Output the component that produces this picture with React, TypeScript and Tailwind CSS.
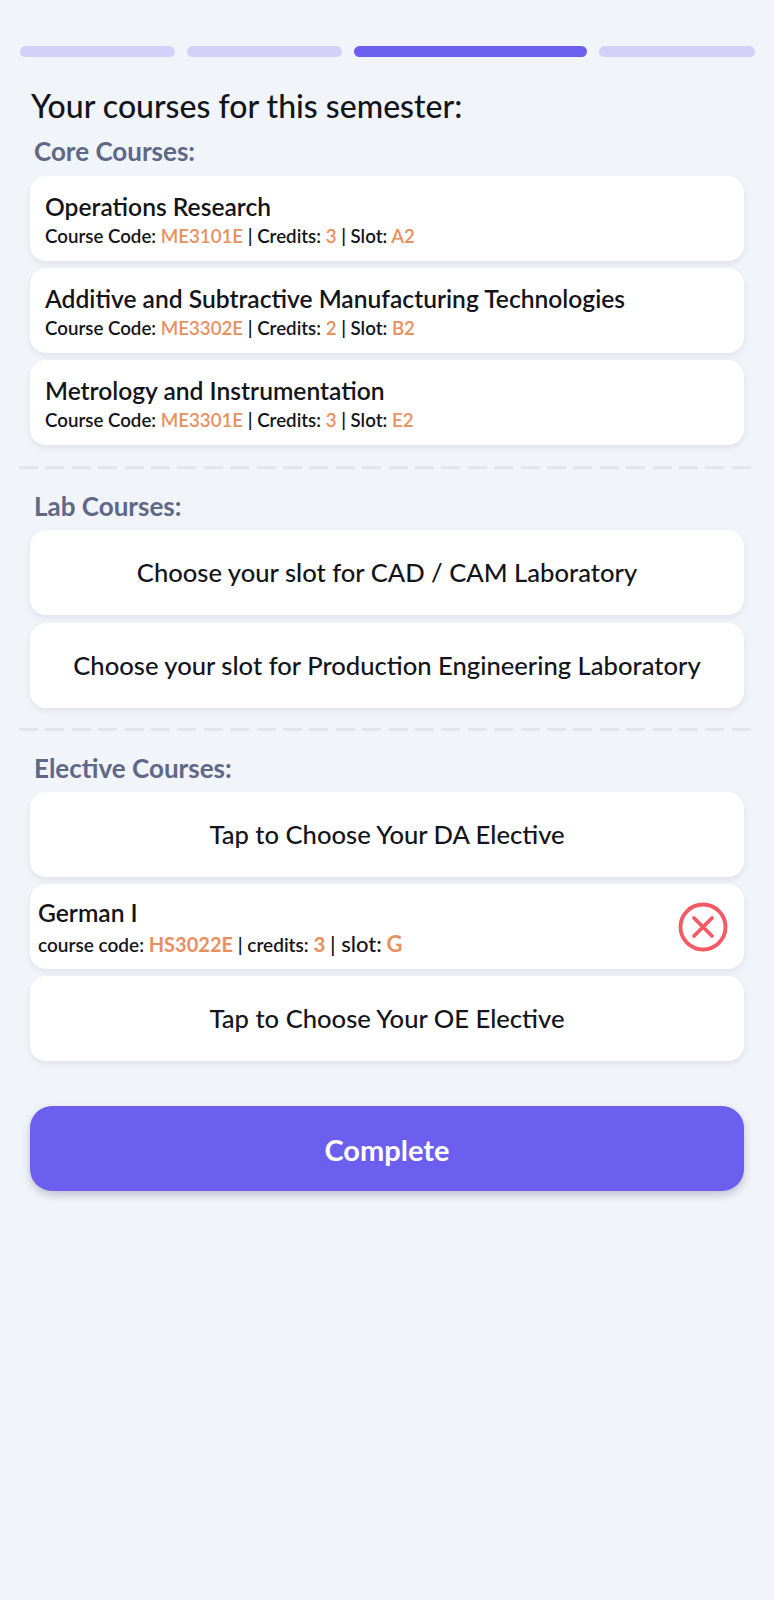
const fontStack = "font-['Lato','Liberation_Sans',sans-serif]"

function ProgressBars() {
  return (
    <div className="flex gap-[12px] pl-[20px]">
      <div className="h-[11px] w-[155px] rounded-full bg-[#d3d1f8]" />
      <div className="h-[11px] w-[155px] rounded-full bg-[#d3d1f8]" />
      <div className="h-[11px] w-[233px] rounded-full bg-[#6c5fef]" />
      <div className="h-[11px] w-[156px] rounded-full bg-[#d3d1f8]" />
    </div>
  )
}

function Val({ children }: { children: string }) {
  return <span className="text-[#e9905f]">{children}</span>
}

function CourseCard({ title, code, credits, slot }: { title: string; code: string; credits: string; slot: string }) {
  return (
    <div className="flex h-[85px] flex-col justify-center rounded-[16px] bg-white pt-[2px] pl-[15px] shadow-[0_3px_6px_rgba(120,130,150,0.14)]">
      <div className="text-[24.6px] leading-[29px] font-semibold text-[#14151a]">{title}</div>
      <div className="mt-[4px] text-[18.7px] leading-[23px] font-semibold text-[#14151a]">
        Course Code: <Val>{code}</Val> | Credits: <Val>{credits}</Val> | Slot: <Val>{slot}</Val>
      </div>
    </div>
  )
}

function ActionCard({ label }: { label: string }) {
  return (
    <div className="flex h-[85px] items-center justify-center rounded-[16px] bg-white text-[25.6px] font-medium text-[#14151a] shadow-[0_3px_6px_rgba(120,130,150,0.14)]">
      {label}
    </div>
  )
}

function Dashes() {
  return <div className="-mx-[11px] h-[3px] bg-[repeating-linear-gradient(90deg,#e2e6ec_0_19px,transparent_19px_26.4px)]" />
}

function SectionLabel({ children }: { children: string }) {
  return <div className="pl-[4px] text-[26px] leading-[30px] font-bold text-[#5f6886]">{children}</div>
}

export default function App() {
  return (
    <div className={`${fontStack} min-h-[1600px] w-[774px] bg-[#f1f4f9] pt-[46px]`}>
      <ProgressBars />
      <div className="px-[30px]">
        <h1 className="mt-[30px] pl-[1px] text-[32px] leading-[38px] font-medium text-[#14151a]">Your courses for this semester:</h1>
        <div className="mt-[11px]">
          <SectionLabel>Core Courses:</SectionLabel>
        </div>
        <div className="mt-[10px] flex flex-col gap-[7px]">
          <CourseCard title="Operations Research" code="ME3101E" credits="3" slot="A2" />
          <CourseCard title="Additive and Subtractive Manufacturing Technologies" code="ME3302E" credits="2" slot="B2" />
          <CourseCard title="Metrology and Instrumentation" code="ME3301E" credits="3" slot="E2" />
        </div>
        <div className="mt-[21px]">
          <Dashes />
        </div>
        <div className="mt-[22px]">
          <SectionLabel>Lab Courses:</SectionLabel>
        </div>
        <div className="mt-[9px] flex flex-col gap-[7.5px]">
          <ActionCard label="Choose your slot for CAD / CAM Laboratory" />
          <ActionCard label="Choose your slot for Production Engineering Laboratory" />
        </div>
        <div className="mt-[20px]">
          <Dashes />
        </div>
        <div className="mt-[22px]">
          <SectionLabel>Elective Courses:</SectionLabel>
        </div>
        <div className="mt-[9.5px] flex flex-col gap-[7px]">
          <ActionCard label="Tap to Choose Your DA Elective" />
          <div className="flex h-[85px] items-center justify-between rounded-[16px] bg-white pr-[16px] pl-[8px] shadow-[0_3px_6px_rgba(120,130,150,0.14)]">
            <div>
              <div className="text-[24.6px] leading-[30px] font-semibold text-[#14151a]">German I</div>
              <div className="mt-[4px] text-[19px] leading-[23px] font-semibold text-[#14151a]">
                course code: <span className="text-[20px] font-bold text-[#e9905f]">HS3022E</span> | credits: <span className="text-[20.5px] font-bold text-[#e9905f]">3</span> <span className="text-[22px] font-medium">| slot:</span> <span className="text-[22px] font-bold text-[#e9905f]">G</span>
              </div>
            </div>
            <svg width="50" height="50" viewBox="0 0 50 50" fill="none" stroke="#f55a64" strokeWidth="3.8" strokeLinecap="round">
              <circle cx="25" cy="25" r="22.5" />
              <path d="M16 16 34 34M34 16 16 34" />
            </svg>
          </div>
          <ActionCard label="Tap to Choose Your OE Elective" />
        </div>
        <div className="mt-[45px] flex h-[85px] items-center justify-center rounded-[22px] bg-[#6c5fef] pt-[3px] text-[29px] font-bold text-white shadow-[0_4px_8px_rgba(80,80,120,0.3)]">
          Complete
        </div>
      </div>
    </div>
  )
}
